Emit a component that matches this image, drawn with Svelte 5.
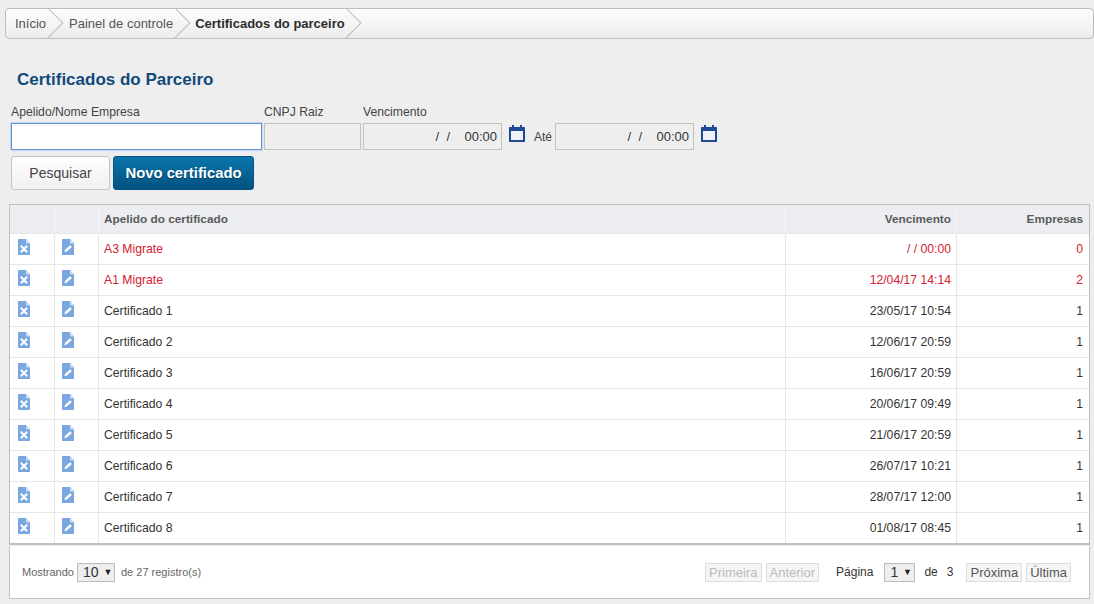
<script>
  const rows = [
    { name: 'A3 Migrate', venc: '/ / 00:00', emp: 0, late: true },
    { name: 'A1 Migrate', venc: '12/04/17 14:14', emp: 2, late: true },
    { name: 'Certificado 1', venc: '23/05/17 10:54', emp: 1 },
    { name: 'Certificado 2', venc: '12/06/17 20:59', emp: 1 },
    { name: 'Certificado 3', venc: '16/06/17 20:59', emp: 1 },
    { name: 'Certificado 4', venc: '20/06/17 09:49', emp: 1 },
    { name: 'Certificado 5', venc: '21/06/17 20:59', emp: 1 },
    { name: 'Certificado 6', venc: '26/07/17 10:21', emp: 1 },
    { name: 'Certificado 7', venc: '28/07/17 12:00', emp: 1 },
    { name: 'Certificado 8', venc: '01/08/17 08:45', emp: 1 }
  ];
</script>

{#snippet calendar()}
  <svg class="cal" width="16" height="17" viewBox="0 0 16 17">
    <path d="M3 0h2v2h6V0h2v2h2.5a.5.5 0 0 1 .5.5v14a.5.5 0 0 1-.5.5H.5a.5.5 0 0 1-.5-.5v-14A.5.5 0 0 1 .5 2H3z" fill="#1f4a94" />
    <rect x="2" y="6" width="12" height="9" fill="#eef1f7" />
  </svg>
{/snippet}

{#snippet fileIcon(kind)}
  <svg width="12" height="16" viewBox="0 0 12 16">
    <path d="M.8 0H8l4 4.5v10.7a.8.8 0 0 1-.8.8H.8a.8.8 0 0 1-.8-.8V.8A.8.8 0 0 1 .8 0z" fill="#7aa7df" />
    <path d="M8 0l4 4.5H8z" fill="#c9dbf2" />
    {#if kind === 'del'}
      <path d="M2.8 6.8l6.4 6.4M9.2 6.8l-6.4 6.4" stroke="#fff" stroke-width="2" />
    {:else}
      <path d="M2.4 13.2l.7-2.4 5-4.6 1.8 1.8-5 4.6z" fill="#fff" />
    {/if}
  </svg>
{/snippet}

<div class="page">
  <nav class="crumbs">
    <span class="crumb">Início</span>
    <span class="crumb">Painel de controle</span>
    <span class="crumb current">Certificados do parceiro</span>
  </nav>

  <h1>Certificados do Parceiro</h1>

  <div class="filters">
    <div class="field name">
      <label for="f-name">Apelido/Nome Empresa</label>
      <input id="f-name" class="focused" type="text" />
    </div>
    <div class="field cnpj">
      <label for="f-cnpj">CNPJ Raiz</label>
      <input id="f-cnpj" type="text" disabled />
    </div>
    <div class="field date">
      <label for="f-de">Vencimento</label>
      <div class="date-row">
        <input id="f-de" type="text" value="/  /    00:00" disabled />
        {@render calendar()}
        <span class="ate">Até</span>
        <input type="text" value="/  /    00:00" disabled />
        {@render calendar()}
      </div>
    </div>
  </div>

  <div class="actions">
    <button class="btn-search">Pesquisar</button>
    <button class="btn-new">Novo certificado</button>
  </div>

  <div class="table-wrap">
    <table>
      <thead>
        <tr>
          <th class="icon-col"></th>
          <th class="icon-col second"></th>
          <th class="left">Apelido do certificado</th>
          <th class="venc">Vencimento</th>
          <th class="emp">Empresas</th>
        </tr>
      </thead>
      <tbody>
        {#each rows as row}
          <tr class:late={row.late}>
            <td class="icon first">{@render fileIcon('del')}</td>
            <td class="icon">{@render fileIcon('edit')}</td>
            <td class="left">{row.name}</td>
            <td>{row.venc}</td>
            <td class="count">{row.emp}</td>
          </tr>
        {/each}
      </tbody>
    </table>
  </div>

  <div class="pager">
    <div class="pager-left">
      <span>Mostrando</span>
      <span class="select">10 <i>▼</i></span>
      <span>de 27 registro(s)</span>
    </div>
    <div class="pager-right">
      <span class="pg-btn off">Primeira</span>
      <span class="pg-btn off">Anterior</span>
      <span class="pg-label">Página</span>
      <span class="select small">1 <i>▼</i></span>
      <span class="pg-label de">de</span>
      <span class="pg-label tres">3</span>
      <span class="pg-btn next">Próxima</span>
      <span class="pg-btn">Última</span>
    </div>
  </div>
</div>

<style>
  :global(body) {
    margin: 0;
    background: #eeeeee;
    font-family: "Liberation Sans", Arial, sans-serif;
  }

  .page {
    height: 604px;
    box-sizing: border-box;
    padding: 8px 4px 0 5px;
    overflow: hidden;
    color: #333;
  }

  .crumbs {
    display: flex;
    height: 31px;
    box-sizing: border-box;
    border: 1px solid #bdbdbd;
    border-radius: 4px;
    background: linear-gradient(#fdfdfd, #ececec);
    overflow: hidden;
    margin-right: -4px;
  }

  .crumb {
    position: relative;
    font-size: 13px;
    line-height: 29px;
    color: #555;
  }

  .crumb:nth-child(1) { padding: 0 23px 0 9px; }
  .crumb:nth-child(2) { padding: 0 22px 0 0; }
  .crumb:nth-child(3) { padding: 0 17px 0 0; }

  .crumb::after {
    content: "";
    position: absolute;
    top: 3px;
    width: 21px;
    height: 21px;
    border-top: 1px solid #bdbdbd;
    border-right: 1px solid #bdbdbd;
    transform: rotate(45deg);
  }

  .crumb:nth-child(1)::after { right: 10px; }
  .crumb:nth-child(2)::after { right: 9px; }
  .crumb:nth-child(3)::after { right: 5px; }

  .current {
    font-weight: bold;
    color: #2c2c2c;
  }

  h1 {
    margin: 31px 0 0 12px;
    font-size: 17px;
    line-height: 20px;
    color: #104a7a;
  }

  .filters {
    display: flex;
    margin: 15px 0 0 6px;
    gap: 2px;
  }

  .field label {
    display: block;
    font-size: 12.2px;
    line-height: 14px;
    height: 18px;
    color: #444;
  }

  input {
    display: block;
    box-sizing: border-box;
    height: 27px;
    padding: 0 4px;
    border: 1px solid #c2c2c2;
    background: #eeeeee;
    font: 13px "Liberation Sans", Arial, sans-serif;
    color: #333;
    text-align: right;
    opacity: 1;
  }

  .name input { width: 251px; }
  .cnpj input { width: 97px; }

  .focused {
    background: #fff;
    border-color: #5f94d6;
    box-shadow: 0 0 2px #7fa9e0;
  }

  .date-row {
    display: flex;
    align-items: center;
  }

  .date-row input { width: 139px; }

  .cal {
    margin: -7px 0 0 7px;
  }

  .ate {
    margin: 0 3px 0 9px;
    font-size: 12px;
    color: #444;
  }

  .actions {
    display: flex;
    gap: 3px;
    margin: 6px 0 0 6px;
  }

  button {
    height: 34px;
    box-sizing: border-box;
    border-radius: 3px;
    font: 14px "Liberation Sans", Arial, sans-serif;
  }

  .btn-search {
    width: 99px;
    border: 1px solid #c4c4c4;
    background: linear-gradient(#ffffff, #f0f0f0);
    color: #444;
  }

  .btn-new {
    width: 141px;
    border: 1px solid #045384;
    background: linear-gradient(#0a75ad, #04527f);
    color: #fff;
    font-size: 14.8px;
    font-weight: bold;
    text-shadow: 0 1px 1px rgba(0, 0, 0, 0.3);
  }

  .table-wrap {
    margin: 14px 0 0 4px;
    width: 1081px;
    box-sizing: border-box;
    border: 1px solid #bfbfbf;
    border-bottom-width: 2px;
    background: #fff;
  }

  table {
    width: 100%;
    border-collapse: collapse;
    table-layout: fixed;
    font-size: 12.2px;
  }

  th {
    height: 28px;
    padding: 0 5px;
    background: #ebedf0;
    color: #5a5a5a;
    font-size: 11.8px;
    text-align: right;
    border-left: 1px solid #f7f7f7;
  }

  th:first-child { border-left: none; }

  .icon-col { width: 34px; }
  .icon-col.second { width: 33px; }
  .venc { width: 160px; }
  .emp { width: 121px; padding-right: 6px; }

  td {
    height: 30px;
    padding: 0 5px;
    border-top: 1px solid #e6e6e6;
    border-left: 1px solid #e6e6e6;
    text-align: right;
    color: #333;
  }

  td:first-child { border-left: none; }

  th.left, td.left { text-align: left; }

  td.count { padding-right: 6px; }

  td.icon {
    text-align: left;
    padding: 0 0 0 7px;
    line-height: 0;
  }

  td.icon.first { padding-left: 8px; }

  td.icon svg {
    display: block;
    margin-top: -5px;
  }

  .late td { color: #d4202f; }

  .pager {
    display: flex;
    justify-content: space-between;
    align-items: center;
    margin: 1px 0 0 4px;
    width: 1081px;
    height: 53px;
    box-sizing: border-box;
    padding: 0 18px 0 12px;
    border: 1px solid #c4c4c4;
    border-top: none;
    background: #fff;
    font-size: 11px;
    color: #666;
  }

  .pager-left, .pager-right {
    display: flex;
    align-items: center;
  }

  .select {
    display: inline-block;
    box-sizing: border-box;
    width: 38px;
    height: 19px;
    margin: 0 6px 0 3px;
    padding-left: 5px;
    border: 1px solid #bbb;
    background: #eeeeee;
    font-size: 14px;
    line-height: 17px;
    color: #333;
  }

  .select i {
    font-style: normal;
    font-size: 9px;
    vertical-align: 2px;
    margin-left: 1px;
    color: #222;
  }

  .select.small {
    width: 31px;
    margin: 0 9px 0 11px;
  }

  .pg-btn {
    box-sizing: border-box;
    height: 19px;
    padding: 0 3px;
    border: 1px solid #ddd;
    background: #f5f5f5;
    font-size: 13px;
    line-height: 17px;
    color: #555;
    margin-left: 4px;
  }

  .pg-btn.off {
    color: #bbb;
  }

  .pg-label {
    font-size: 12px;
    color: #333;
    margin-left: 17px;
  }

  .pg-label.de { margin-left: 0; }
  .pg-label.tres { margin-left: 9px; }
  .pg-btn.next { margin-left: 13px; }
</style>
